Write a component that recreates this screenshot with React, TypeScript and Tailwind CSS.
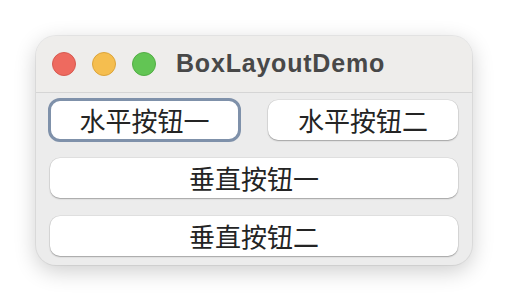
import React from "react";

const cjk = { fontFamily: '"Noto Sans CJK SC", "Noto Sans", sans-serif' };

const btnBase =
  "flex items-center justify-center h-[40px] rounded-[10px] bg-white text-[26px] leading-none text-[#242424] shadow-[0_1px_1.5px_rgba(0,0,0,0.28),0_0_0_0.5px_rgba(0,0,0,0.1)]";

function TrafficLights() {
  return (
    <div className="flex items-center gap-4">
      <div className="w-6 h-6 rounded-full bg-[#ee6a5f] border border-[#d65a50]" />
      <div className="w-6 h-6 rounded-full bg-[#f5be4f] border border-[#dba43b]" />
      <div className="w-6 h-6 rounded-full bg-[#62c554] border border-[#52ad45]" />
    </div>
  );
}

export default function App() {
  return (
    <div className="w-[508px] h-[302px] bg-white pl-[36px] pt-[36px]">
      <div className="w-[436px] h-[229px] rounded-[20px] bg-[#ececec] overflow-hidden shadow-[0_6px_22px_rgba(0,0,0,0.2),0_0_0_1px_rgba(0,0,0,0.06)] flex flex-col">
        {/* title bar */}
        <div className="h-[57px] shrink-0 bg-[#eeedeb] border-b border-[#d5d5d5] flex items-center pl-4 gap-5">
          <TrafficLights />
          <span
            className="text-[25px] font-bold tracking-[0.8px] text-[#484848] leading-none -mt-[2px]"
            style={{ fontFamily: '"Liberation Sans", Arial, sans-serif' }}
          >
            BoxLayoutDemo
          </span>
        </div>

        {/* content */}
        <div className="flex flex-col gap-[18px] pt-[7px] px-[14px]" style={cjk}>
          <div className="flex justify-between">
            <button
              className={`${btnBase} w-[189px] outline-3 outline-solid outline-[#7f91aa] -outline-offset-1`}
            >
              水平按钮一
            </button>
            <button className={`${btnBase} w-[190px]`}>水平按钮二</button>
          </div>
          <button className={`${btnBase} w-full`}>垂直按钮一</button>
          <button className={`${btnBase} w-full`}>垂直按钮二</button>
        </div>
      </div>
    </div>
  );
}
